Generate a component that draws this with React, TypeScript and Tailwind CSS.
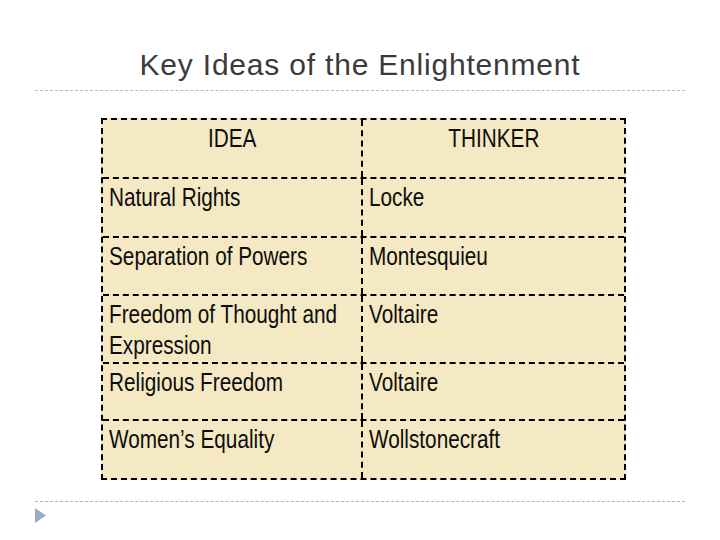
import React from "react";

const rows: { idea: string[]; thinker: string; h: string }[] = [
  { idea: ["Natural Rights"], thinker: "Locke", h: "h-[59px]" },
  { idea: ["Separation of Powers"], thinker: "Montesquieu", h: "h-[58px]" },
  { idea: ["Freedom of Thought and", "Expression"], thinker: "Voltaire", h: "h-[68px]" },
  { idea: ["Religious Freedom"], thinker: "Voltaire", h: "h-[57px]" },
  { idea: ["Women\u2019s Equality"], thinker: "Wollstonecraft", h: "h-[59px]" },
];

function N({ children, center }: { children: React.ReactNode; center?: boolean }) {
  return (
    <span
      className={`inline-block whitespace-nowrap scale-x-[0.83] ${center ? "origin-center" : "origin-left"}`}
    >
      {children}
    </span>
  );
}

export default function App() {
  return (
    <div className="w-[720px] h-[540px] bg-white flex flex-col overflow-hidden">
      <div
        className="pt-[47px] h-[83px] text-center text-[30px] leading-[36px] tracking-[0.8px] text-[#3b3b3d]"
        style={{ fontFamily: '"Liberation Sans", Arial, sans-serif' }}
      >
        Key Ideas of the Enlightenment
      </div>
      <div className="mx-[35px] mt-[7px] border-t border-dashed border-[#b8b8b8]" />
      <div
        className="mt-[27px] ml-[101px] w-[525px] bg-[#f4e9c2] border-2 border-dashed border-black text-[#0d0d0d] text-[25px] leading-[31px]"
        style={{ fontFamily: '"Liberation Sans", Arial, sans-serif' }}
      >
        <div className="flex h-[57px]">
          <div className="w-[260px] border-r-2 border-dashed border-black text-center pt-[3px]">
            <N center>IDEA</N>
          </div>
          <div className="flex-1 text-center pt-[3px]">
            <N center>THINKER</N>
          </div>
        </div>
        {rows.map((r, i) => (
          <div key={i} className={`flex border-t-2 border-dashed border-black ${r.h}`}>
            <div className="w-[260px] border-r-2 border-dashed border-black pl-[6px] pt-[3px]">
              {r.idea.map((l, j) => (
                <div key={j}>
                  <N>{l}</N>
                </div>
              ))}
            </div>
            <div className="flex-1 pl-[6px] pt-[3px]">
              <N>{r.thinker}</N>
            </div>
          </div>
        ))}
      </div>
      <div className="mx-[35px] mt-[21px] border-t border-dashed border-[#a9b5c4]" />
      <div className="ml-[35px] mt-[6px]">
        <svg width="11" height="15" viewBox="0 0 11 15">
          <polygon points="0,0 11,7.5 0,15" fill="#97adc6" />
        </svg>
      </div>
    </div>
  );
}
